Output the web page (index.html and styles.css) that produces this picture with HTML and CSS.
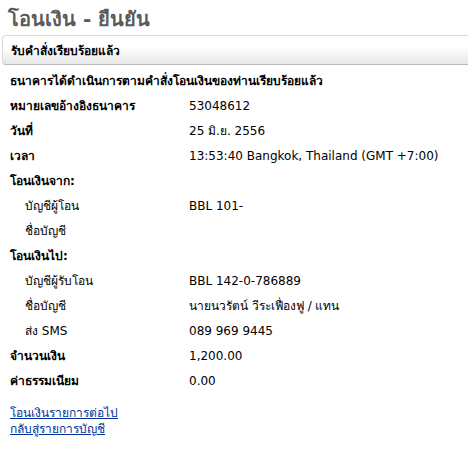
FILE: index.html
```html
<!DOCTYPE html>
<html lang="th">
<head>
    <meta charset="UTF-8">
    <title>โอนเงิน - ยืนยัน</title>
    <link rel="stylesheet" href="styles.css">
</head>
<body>
    <div class="page">
        <h1 class="title">โอนเงิน - ยืนยัน</h1>

        <div class="status-bar">รับคำสั่งเรียบร้อยแล้ว</div>

        <div class="message">ธนาคารได้ดำเนินการตามคำสั่งโอนเงินของท่านเรียบร้อยแล้ว</div>

        <div class="details">
            <div class="label">หมายเลขอ้างอิงธนาคาร</div>
            <div class="value">53048612</div>

            <div class="label">วันที่</div>
            <div class="value">25 มิ.ย. 2556</div>

            <div class="label">เวลา</div>
            <div class="value">13:53:40 Bangkok, Thailand (GMT +7:00)</div>

            <div class="label section">โอนเงินจาก:</div>
            <div class="value"></div>

            <div class="sub-label">บัญชีผู้โอน</div>
            <div class="value">BBL 101-</div>

            <div class="sub-label">ชื่อบัญชี</div>
            <div class="value"></div>

            <div class="label section">โอนเงินไป:</div>
            <div class="value"></div>

            <div class="sub-label">บัญชีผู้รับโอน</div>
            <div class="value">BBL 142-0-786889</div>

            <div class="sub-label">ชื่อบัญชี</div>
            <div class="value">นายนวรัตน์ วีระเฟื่องฟู / แทน</div>

            <div class="sub-label">ส่ง SMS</div>
            <div class="value">089 969 9445</div>

            <div class="label">จำนวนเงิน</div>
            <div class="value">1,200.00</div>

            <div class="label">ค่าธรรมเนียม</div>
            <div class="value">0.00</div>
        </div>

        <div class="links">
            <a href="#">โอนเงินรายการต่อไป</a>
            <a href="#">กลับสู่รายการบัญชี</a>
        </div>
    </div>
</body>
</html>
```

FILE: styles.css
```css
* {
    margin: 0;
    padding: 0;
    box-sizing: border-box;
}

body {
    font-family: Tahoma, "DejaVu Sans", "Noto Sans", sans-serif;
    font-size: 12px;
    color: #000;
    background: white;
}

.page {
    padding: 8px 0 0 2px;
}

.title {
    font-size: 20px;
    font-weight: bold;
    color: #5a5a5a;
    padding-left: 6px;
    line-height: 22px;
}

.status-bar {
    margin-top: 5px;
    height: 30px;
    display: flex;
    align-items: center;
    padding-left: 8px;
    font-weight: bold;
    border: 1px solid #d8d8d8;
    border-bottom-color: #b8b8b8;
    border-right: none;
    border-radius: 4px 0 0 4px;
    background: linear-gradient(#ffffff 40%, #e6e6e6 100%);
}

.message {
    font-weight: bold;
    padding: 8px 0 0 8px;
    line-height: 16px;
}

.details {
    display: grid;
    grid-template-columns: 179px 1fr;
    grid-auto-rows: 25px;
    padding: 4px 0 0 8px;
    align-items: center;
}

.label {
    font-weight: bold;
}

.sub-label {
    padding-left: 15px;
}

.links {
    padding: 12px 0 0 8px;
}

.links a {
    display: block;
    width: max-content;
    height: 16px;
    line-height: 16px;
    color: #003399;
}
```
